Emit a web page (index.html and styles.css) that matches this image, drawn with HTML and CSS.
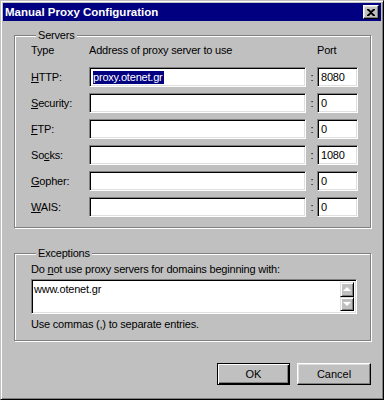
FILE: index.html
```html
<!DOCTYPE html>
<html lang="en">
<head>
  <meta charset="UTF-8">
  <title>Manual Proxy Configuration</title>
  <link rel="stylesheet" href="styles.css">
</head>
<body>

  <div class="window">
    <div class="titlebar">
      <span class="title">Manual Proxy Configuration</span>
      <button class="close-button">
        <svg width="8" height="7" viewBox="0 0 8 7">
          <path d="M0 0h2l2 2 2-2h2v1L5 3.5 8 6v1H6L4 5 2 7H0V6l3-2.5L0 1z" fill="#000"/>
        </svg>
      </button>
    </div>

    <div class="content">
      <fieldset class="group servers">
        <legend>Servers</legend>
        <div class="proxy-grid">
          <span class="col-head">Type</span>
          <span class="col-head">Address of proxy server to use</span>
          <span></span>
          <span class="col-head">Port</span>

          <label><u>H</u>TTP:</label>
          <div class="field"><span class="selected">proxy.otenet.gr</span></div>
          <span class="colon">:</span>
          <div class="field port">8080</div>

          <label><u>S</u>ecurity:</label>
          <div class="field"></div>
          <span class="colon">:</span>
          <div class="field port">0</div>

          <label><u>F</u>TP:</label>
          <div class="field"></div>
          <span class="colon">:</span>
          <div class="field port">0</div>

          <label>So<u>c</u>ks:</label>
          <div class="field"></div>
          <span class="colon">:</span>
          <div class="field port">1080</div>

          <label><u>G</u>opher:</label>
          <div class="field"></div>
          <span class="colon">:</span>
          <div class="field port">0</div>

          <label><u>W</u>AIS:</label>
          <div class="field"></div>
          <span class="colon">:</span>
          <div class="field port">0</div>
        </div>
      </fieldset>

      <fieldset class="group exceptions">
        <legend>Exceptions</legend>
        <p class="hint">Do <u>n</u>ot use proxy servers for domains beginning with:</p>
        <div class="field text-area">
          <span class="area-text">www.otenet.gr</span>
          <div class="scrollbar">
            <span class="scroll-btn"><span class="arrow up"></span></span>
            <span class="scroll-btn"><span class="arrow down"></span></span>
          </div>
        </div>
        <p class="note">Use commas (,) to separate entries.</p>
      </fieldset>

      <div class="button-row">
        <button class="button default">OK</button>
        <button class="button">Cancel</button>
      </div>
    </div>
  </div>

</body>
</html>
```

FILE: styles.css
```css
* {
  box-sizing: border-box;
}
body {
  margin: 0;
  font-family: "Liberation Sans", Arial, sans-serif;
  font-size: 11px;
  letter-spacing: -0.2px;
  color: #000;
  background-color: #c0c0c0;
}
.window {
  width: 384px;
  height: 400px;
  padding: 2px;
  background-color: #c0c0c0;
  border: 1px solid;
  border-color: #c0c0c0 #000 #000 #c0c0c0;
  box-shadow: inset 1px 1px #fff, inset -1px -1px #808080;
  display: flex;
  flex-direction: column;
}
.titlebar {
  height: 18px;
  background-color: #000080;
  display: flex;
  justify-content: space-between;
  align-items: center;
  padding: 0 2px;
}
.title {
  color: #fff;
  font-weight: bold;
  font-size: 11.5px;
  letter-spacing: 0;
}
.close-button {
  width: 16px;
  height: 14px;
  padding: 0;
  display: flex;
  align-items: center;
  justify-content: center;
  background-color: #c0c0c0;
  border: 1px solid;
  border-color: #fff #000 #000 #fff;
  box-shadow: inset -1px -1px #808080, inset 1px 1px #dfdfdf;
}
.content {
  flex: 1;
  display: flex;
  flex-direction: column;
  padding: 8px 10px 12px 11px;
}
.group {
  margin: 0;
  border: 1px solid #808080;
  box-shadow: inset 1px 1px #fff, 1px 1px #fff;
  min-width: 0;
}
.group legend {
  padding: 0 2px;
  margin-left: 5px;
  line-height: 13px;
  background-color: #c0c0c0;
}
.servers {
  padding: 2px 13px 10px 16px;
}
.proxy-grid {
  display: grid;
  grid-template-columns: 58px 217px 11px 41px;
  grid-template-rows: 17px;
  grid-auto-rows: 20px;
  row-gap: 6px;
  align-items: center;
}
.proxy-grid .col-head {
  align-self: start;
  line-height: 13px;
}
.proxy-grid label {
  line-height: 13px;
}
.colon {
  text-align: center;
  padding-left: 1px;
}
.field {
  height: 20px;
  background-color: #fff;
  border: 1px solid;
  border-color: #808080 #fff #fff #808080;
  box-shadow: inset 1px 1px #000, inset -1px -1px #dfdfdf;
  padding: 2px 3px;
  line-height: 14px;
  white-space: nowrap;
  overflow: hidden;
}
.selected {
  background-color: #000080;
  color: #fff;
  display: inline-block;
  line-height: 13px;
  padding-right: 1px;
}
.exceptions {
  margin-top: 19px;
  padding: 3px 13px 9px 16px;
}
.hint, .note {
  margin: 0;
  line-height: 13px;
}
.text-area {
  height: 35px;
  margin: 3px 0 4px;
  display: flex;
  justify-content: space-between;
  padding: 3px 2px 2px 2px;
}
.area-text {
  line-height: 13px;
}
.scrollbar {
  display: flex;
  flex-direction: column;
  margin-top: -1px;
}
.scroll-btn {
  width: 14px;
  height: 15px;
  background-color: #c0c0c0;
  border: 1px solid;
  border-color: #dfdfdf #000 #000 #dfdfdf;
  box-shadow: inset 1px 1px #fff, inset -1px -1px #808080;
  display: flex;
  align-items: center;
  justify-content: center;
}
.arrow {
  width: 0;
  height: 0;
  border-left: 4px solid transparent;
  border-right: 4px solid transparent;
}
.arrow.up {
  border-bottom: 4px solid #fff;
}
.arrow.down {
  border-top: 4px solid #fff;
}
.button-row {
  margin-top: auto;
  display: flex;
  justify-content: flex-end;
  gap: 7px;
}
.button {
  width: 74px;
  height: 22px;
  padding: 0;
  font-family: "Liberation Sans", Arial, sans-serif;
  font-size: 11px;
  color: #000;
  background-color: #c0c0c0;
  border: 1px solid;
  border-color: #fff #000 #000 #fff;
  box-shadow: inset -1px -1px #808080, inset 1px 1px #dfdfdf;
}
.button.default {
  width: 73px;
  border-color: #000;
  box-shadow: inset 1px 1px #fff, inset -1px -1px #000, inset -2px -2px #808080;
}
```
